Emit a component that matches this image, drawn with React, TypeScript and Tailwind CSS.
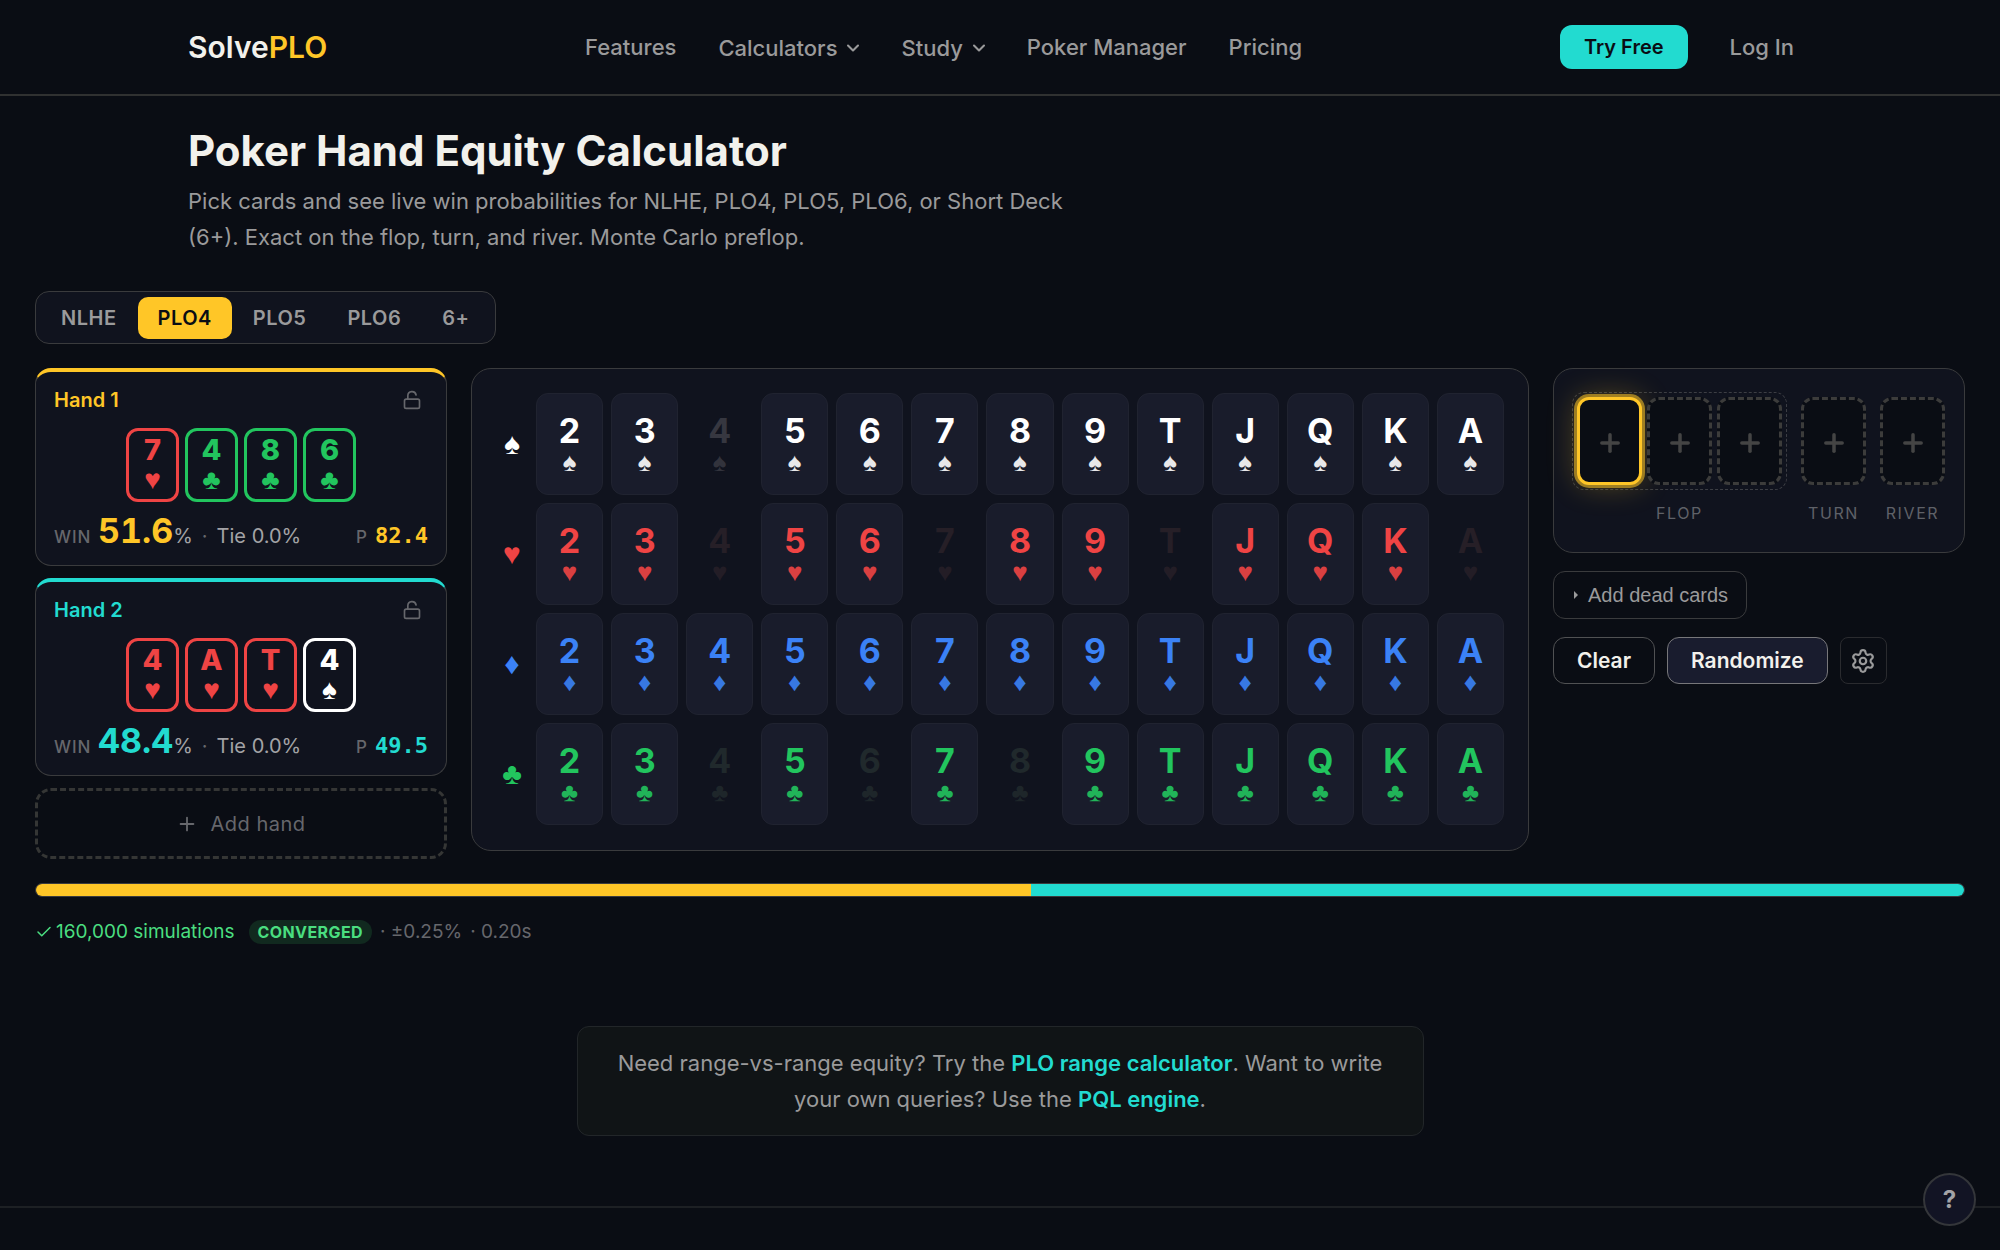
import { useState } from 'react'
import { Check, ChevronDown, LockOpen, Plus, Settings } from 'lucide-react'

type Suit = 's' | 'h' | 'd' | 'c'

const GAMES = ['NLHE', 'PLO4', 'PLO5', 'PLO6', '6+']
const RANKS = ['2', '3', '4', '5', '6', '7', '8', '9', 'T', 'J', 'Q', 'K', 'A']

const SUITS: { id: Suit; symbol: string; name: string; color: string; used: string; border: string }[] = [
  { id: 's', symbol: '♠', name: 'spades', color: 'text-white', used: 'text-[#363740]', border: 'border-white' },
  { id: 'h', symbol: '♥', name: 'hearts', color: 'text-[#ef4444]', used: 'text-[#261f27]', border: 'border-[#ef4444]' },
  { id: 'd', symbol: '♦', name: 'diamonds', color: 'text-[#3b82f6]', used: 'text-[#1c2433]', border: 'border-[#3b82f6]' },
  { id: 'c', symbol: '♣', name: 'clubs', color: 'text-[#22c55e]', used: 'text-[#20292c]', border: 'border-[#22c55e]' },
]

const HANDS = [
  { name: 'Hand 1', cards: ['7h', '4c', '8c', '6c'], win: 51.6, tie: '0.0', p: '82.4', text: 'text-[#ffc627]', top: 'border-t-[#ffc627]', bar: 'bg-[#ffc627]' },
  { name: 'Hand 2', cards: ['4h', 'Ah', 'Th', '4s'], win: 48.4, tie: '0.0', p: '49.5', text: 'text-[#22dbd0]', top: 'border-t-[#22dbd0]', bar: 'bg-[#22dbd0]' },
]

const USED = HANDS.flatMap(h => h.cards)

const NAV = [
  { label: 'Features', menu: false },
  { label: 'Calculators', menu: true },
  { label: 'Study', menu: true },
  { label: 'Poker Manager', menu: false },
  { label: 'Pricing', menu: false },
]

const suitOf = (card: string) => SUITS.find(s => s.id === card[1])!

function Header() {
  return (
    <header className="border-b-2 border-[#303131]">
      <div className="mx-auto flex h-[94px] max-w-[1624px] items-center justify-between">
        <a href="#" className="text-[30px] font-semibold text-[#f2f1ec]">
          Solve<span className="text-[#ffc627]">PLO</span>
        </a>
        <nav className="flex items-center gap-[42px] text-[22px] font-medium text-[#9a9a9b]">
          {NAV.map(n => n.menu ? (
            <button key={n.label} className="flex items-center gap-[6px] pt-[2px]">
              {n.label} <ChevronDown size={20} strokeWidth={2.5} className="-mr-1" />
            </button>
          ) : (
            <a key={n.label} href="#">{n.label}</a>
          ))}
        </nav>
        <div className="flex items-center text-[22px] font-medium">
          <a href="#" className="flex h-11 items-center rounded-xl bg-[#22dbd0] px-6 text-[20px] font-semibold text-[#0a0d14]">Try Free</a>
          <a href="#" className="pl-[42px] pr-[18px] text-[#9a9a9b]">Log In</a>
        </div>
      </div>
    </header>
  )
}

function HandCard({ hand }: { hand: typeof HANDS[number] }) {
  return (
    <section className={`h-[198px] rounded-2xl border border-t-4 border-[#3a3b3d] bg-[#10131e] px-[18px] pt-3 ${hand.top}`}>
      <div className="flex h-8 items-center justify-between">
        <h2 className={`text-[20px] font-semibold ${hand.text}`}>{hand.name}</h2>
        <button aria-label={`Lock ${hand.name}`} className="pr-[6px] text-[#66676c]"><LockOpen size={20} /></button>
      </div>
      <div className="mt-3 flex justify-center gap-[6px]">
        {hand.cards.map(c => {
          const suit = suitOf(c)
          return (
            <button key={c} aria-label={`${c[0]} of ${suit.name}`}
              className={`flex h-[74px] w-[53px] flex-col items-center rounded-xl border-3 pt-[3px] ${suit.border} ${suit.color}`}>
              <span className="text-[29px] font-extrabold leading-[32px]">{c[0]}</span>
              <span className="font-['Liberation_Sans'] text-[28px] leading-[28px]">{suit.symbol}</span>
            </button>
          )
        })}
      </div>
      <div className="mt-[9px] flex h-10 items-baseline">
        <span className="text-[17px] font-medium tracking-wider text-[#66676c]">WIN</span>
        <span className={`ml-[7px] text-[34px] font-bold leading-10 tabular-nums ${hand.text}`}>{hand.win.toFixed(1)}</span>
        <span className="text-[20px] text-[#a3a3a6]">%</span>
        <span className="mx-[9px] text-[20px] text-[#66676c]">·</span>
        <span className="text-[20px] text-[#a3a3a6]">Tie {hand.tie}%</span>
        <span className="ml-auto text-[17px] font-medium text-[#66676c]">P</span>
        <span className={`ml-2 font-['DejaVu_Sans_Mono'] text-[22px] font-semibold ${hand.text}`}>{hand.p}</span>
      </div>
    </section>
  )
}

function Deck() {
  return (
    <section aria-label="Deck" className="flex flex-col gap-2 self-start rounded-[20px] border border-[#3a3b3d] bg-[#10131e] px-6 pb-[25px] pt-6">
      {SUITS.map(suit => (
        <div key={suit.id} className="grid grid-cols-[32px_repeat(13,minmax(0,1fr))] items-center gap-x-2">
          <span className={`text-center font-['Liberation_Sans'] text-[30px] leading-8 ${suit.color}`}>{suit.symbol}</span>
          {RANKS.map(r => {
            const used = USED.includes(r + suit.id)
            return (
              <button key={r} disabled={used} aria-label={`${r} of ${suit.name}`}
                className={`flex h-[102px] flex-col items-center rounded-xl border pt-[19px] ${used ? `border-transparent ${suit.used}` : `border-[#202330] bg-[#191c2b] ${suit.color}`}`}>
                <span className="text-[34px] font-bold leading-9">{r}</span>
                <span className="font-['Liberation_Sans'] text-[26px] leading-[26px] opacity-90">{suit.symbol}</span>
              </button>
            )
          })}
        </div>
      ))}
    </section>
  )
}

function Slot({ label, active = false }: { label: string; active?: boolean }) {
  return (
    <button aria-label={label}
      className={`flex h-[88px] w-[65px] items-center justify-center rounded-xl border-3 bg-[#0a0d14] pt-1 text-[#444444] ${active ? 'border-[#ffc627] shadow-[0_0_0_3px_rgba(255,198,39,0.55),0_0_30px_rgba(255,198,39,0.3)]' : 'border-dashed border-[#3c3c3b]'}`}>
      <Plus size={28} strokeWidth={3} />
    </button>
  )
}

function Board() {
  return (
    <section aria-label="Board" className="flex h-[185px] justify-between rounded-[20px] border border-[#3a3b3d] bg-[#10131e] pl-[18px] pr-[19px] pt-[23px] text-[16px] tracking-widest text-[#5f6168]">
      <div className="flex flex-col items-center gap-[11px]">
        <div className="flex gap-[5px] rounded-xl border border-dashed border-[#3c3e44] p-1">
          <Slot label="Flop card 1" active />
          <Slot label="Flop card 2" />
          <Slot label="Flop card 3" />
        </div>
        <span>FLOP</span>
      </div>
      {['TURN', 'RIVER'].map(street => (
        <div key={street} className="flex w-[65px] flex-col items-center gap-4 pt-[5px]">
          <Slot label={street} />
          <span>{street}</span>
        </div>
      ))}
    </section>
  )
}

export default function App() {
  const [game, setGame] = useState('PLO4')

  return (
    <div className="min-h-screen bg-[#0a0d14] font-[Inter,sans-serif] text-[#f2f1ec]">
      <Header />

      <main className="px-[35px] pt-[31px]">
        {/* Intro */}
        <div className="mx-auto max-w-[1624px]">
          <h1 className="text-[42px] font-bold leading-[48px]">Poker Hand Equity Calculator</h1>
          <p className="mt-2 max-w-[920px] text-[22px] leading-9 text-[#9a9a9b]">
            Pick cards and see live win probabilities for NLHE, PLO4, PLO5, PLO6, or Short Deck (6+). Exact on the flop, turn, and river. Monte Carlo preflop.
          </p>
        </div>

        {/* Game tabs */}
        <div className="mt-9 inline-flex h-[53px] items-center gap-px rounded-[14px] border border-[#3a3b3d] bg-[#10131e] px-[5px]">
          {GAMES.map(g => (
            <button key={g} onClick={() => setGame(g)}
              className={`h-[42px] rounded-[10px] px-5 text-[20px] font-semibold tracking-wide ${game === g ? 'bg-[#ffc627] text-[#0a0d14]' : 'text-[#9a9a9b]'}`}>
              {g}
            </button>
          ))}
        </div>

        <div className="mt-6 grid grid-cols-[412px_minmax(0,1fr)_412px] gap-6">
          <div className="flex flex-col gap-3">
            {HANDS.map(h => <HandCard key={h.name} hand={h} />)}
            <button className="flex h-[71px] items-center justify-center gap-3 rounded-2xl border-3 border-dashed border-[#353635] text-[20px] tracking-wide text-[#66676c]">
              <Plus size={22} /> Add hand
            </button>
          </div>

          <Deck />

          <div>
            <Board />
            <button className="mt-[18px] flex h-12 items-center gap-2 rounded-xl border border-[#3a3b3d] px-[18px] font-['Liberation_Sans'] text-[20px] text-[#9a9a9b]">
              <svg width="8" height="8" viewBox="0 0 8 8" fill="currentColor"><path d="M2 0l4 4-4 4z" /></svg>
              Add dead cards
            </button>
            <div className="mt-[18px] flex gap-3 text-[21px] font-semibold">
              <button className="h-[47px] rounded-xl border border-[#505153] px-[23px]">Clear</button>
              <button className="h-[47px] rounded-xl border border-[#77777a] bg-[#191c2e] px-[23px]">Randomize</button>
              <button aria-label="Settings" className="flex h-[47px] w-[47px] items-center justify-center rounded-lg border border-[#2a2b2f] text-[#9a9a9b]">
                <Settings size={26} strokeWidth={2} />
              </button>
            </div>
          </div>
        </div>

        {/* Equity bar */}
        <div className="mt-6 flex h-[14px] overflow-hidden rounded-full border border-[#3a3b3d]">
          {HANDS.map(h => <div key={h.name} className={h.bar} style={{ width: `${h.win}%` }} />)}
        </div>

        <div className="mt-[23px] flex h-6 items-center text-[19px] text-[#66676c]">
          <Check size={18} className="mr-[3px] text-[#4ade80]" />
          <span className="text-[#4ade80]">160,000 simulations</span>
          <span className="ml-[14px] flex h-6 items-center rounded-full bg-[#11291f] px-[9px] text-[16px] font-bold tracking-wide text-[#4ade80]">CONVERGED</span>
          <span className="ml-2">· ±0.25%</span>
          <span className="ml-2">· 0.20s</span>
        </div>

        <p className="mx-auto mt-[82px] max-w-[847px] rounded-xl border border-[#222629] bg-[#101416] px-8 py-[18px] text-center text-[22px] leading-9 text-[#9a9a9b]">
          Need range-vs-range equity? Try the <a href="#" className="font-semibold text-[#22dbd0]">PLO range calculator</a>. Want to write<br />
          your own queries? Use the <a href="#" className="font-semibold text-[#22dbd0]">PQL engine</a>.
        </p>
      </main>

      <footer className="mt-[70px] border-t-2 border-[#1d2024]" />

      <button aria-label="Help" className="fixed bottom-6 right-6 h-[53px] w-[53px] rounded-full border-2 border-[#34363a] bg-[#121424] text-[24px] font-bold text-[#a3a3a6]">?</button>
    </div>
  )
}
